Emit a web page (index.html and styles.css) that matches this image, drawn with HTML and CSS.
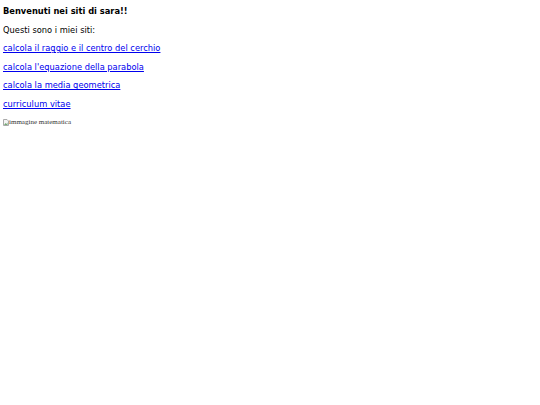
FILE: index.html
```html
<!DOCTYPE html>
<html lang="it">
<head>
    <meta charset="UTF-8">
    <title>Benvenuti</title>
    <link rel="stylesheet" href="styles.css">
</head>
<body>
    <p class="title"><b>Benvenuti nei siti di sara!!</b></p>
    <p>Questi sono i miei siti:</p>
    <p><a href="#">calcola il raggio e il centro del cerchio</a></p>
    <p><a href="#">calcola l'equazione della parabola</a></p>
    <p><a href="#">calcola la media geometrica</a></p>
    <p><a href="#">curriculum vitae</a></p>
    <span class="broken">
        <svg width="6" height="7" viewBox="0 0 6 7">
            <path d="M0.5 0.5h3.5l1.5 1.5v4.5h-5z" fill="#f4f4f4" stroke="#aaa"/>
            <path d="M1 6l1.5-2 1 1 1-1.5v2.5z" fill="#7a7"/>
        </svg>immagine matematica</span>
</body>
</html>
```
FILE: styles.css
```css
body {
    margin: 0 3px;
    font-family: "DejaVu Sans", sans-serif;
    font-size: 8.3px;
    color: #000;
    background: #fff;
}

p {
    margin: 0 0 8.6px 0;
    line-height: 10px;
}

.title {
    padding-top: 6px;
}

a {
    color: #0000ee;
}

.broken {
    display: inline-flex;
    align-items: center;
    font-family: "Liberation Serif", serif;
    font-size: 7px;
    color: #333;
}
```
